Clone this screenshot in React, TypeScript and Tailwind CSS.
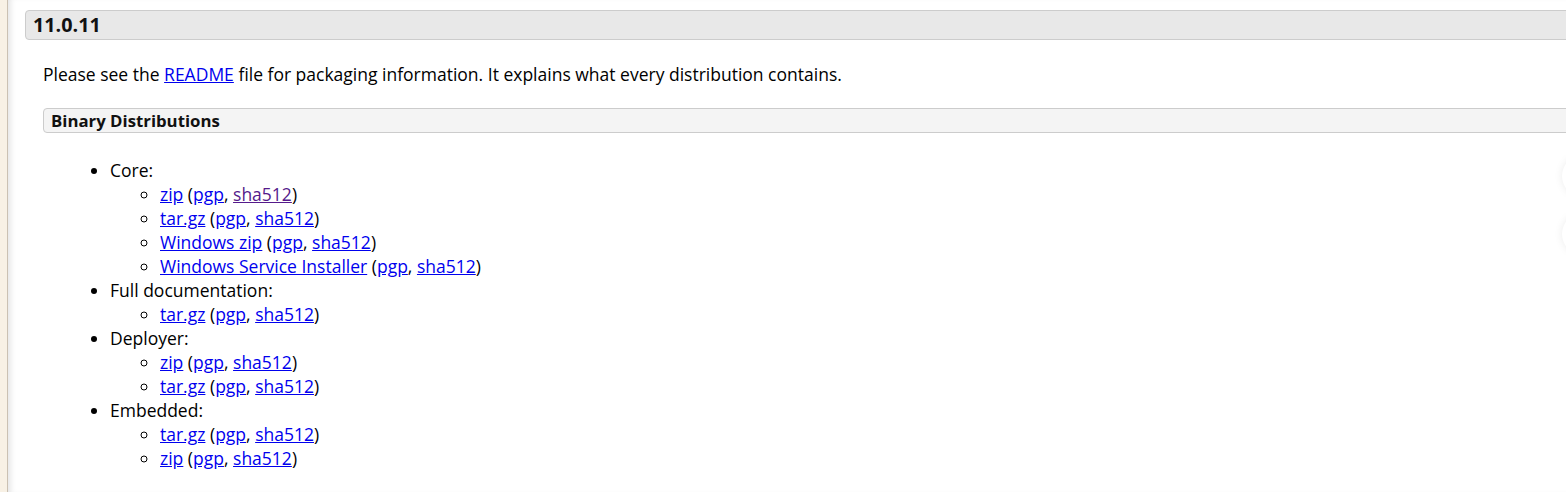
export default function App() {
  const link = "text-[#0000ee] underline";
  const Sub = ({ name, visited }: { name: string; visited?: boolean }) => (
    <li className="list-[circle]">
      <a className={link}>{name}</a> (<a className={link}>pgp</a>,{" "}
      <a className={visited ? "text-[#551a8b] underline" : link}>sha512</a>)
    </li>
  );

  return (
    <div className="relative flex h-[492px] w-[1566px] overflow-hidden bg-white font-['Open_Sans',sans-serif] text-[17.5px] leading-[24px] text-black">
      <div className="w-2 shrink-0 border-r border-[#cbc1b3] bg-[#f8f1e5]" />
      <div className="flex-1 pl-[17px] pt-[10px] shadow-[inset_6px_0_6px_-4px_rgba(0,0,0,0.12)]">
        <h3 className="mr-[-12px] h-[30px] rounded-[4px] border border-[#cccccc] bg-[#e8e8e8] pl-[7px] text-[19.8px] font-bold leading-[28px] text-[#111]">
          11.0.11
        </h3>
        <div className="pl-[18px]">
          <p className="mt-[22px] leading-[24px]">
            Please see the <a className={link}>README</a> file for packaging information. It explains what every
            distribution contains.
          </p>
          <h4 className="mr-[-12px] mt-[22px] h-[25px] rounded-[4px] border border-[#cccccc] bg-[#f4f4f4] pl-[7px] text-[16.8px] font-bold leading-[23px] text-[#111]">
            Binary Distributions
          </h4>
          <ul className="mt-[25px] list-disc pl-[67px]">
            <li>
              Core:
              <ul className="pl-[50px]">
                <Sub name="zip" visited />
                <Sub name="tar.gz" />
                <Sub name="Windows zip" />
                <Sub name="Windows Service Installer" />
              </ul>
            </li>
            <li>
              Full documentation:
              <ul className="pl-[50px]">
                <Sub name="tar.gz" />
              </ul>
            </li>
            <li>
              Deployer:
              <ul className="pl-[50px]">
                <Sub name="zip" />
                <Sub name="tar.gz" />
              </ul>
            </li>
            <li>
              Embedded:
              <ul className="pl-[50px]">
                <Sub name="tar.gz" />
                <Sub name="zip" />
              </ul>
            </li>
          </ul>
        </div>
      </div>
      <div className="absolute left-[1562px] top-[155px] h-[42px] w-[42px] rounded-full bg-white shadow-[0_0_8px_rgba(0,0,0,0.08)]" />
      <div className="absolute left-[1562px] top-[213px] h-[42px] w-[42px] rounded-full bg-white shadow-[0_0_8px_rgba(0,0,0,0.08)]" />
    </div>
  );
}
